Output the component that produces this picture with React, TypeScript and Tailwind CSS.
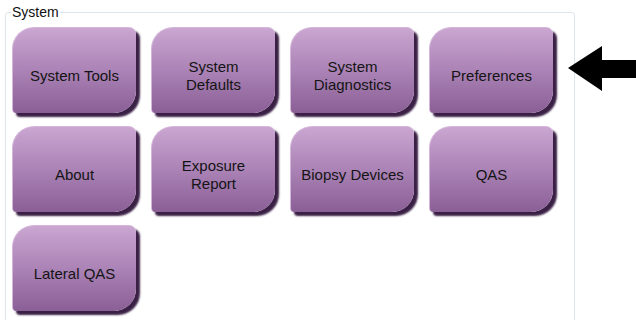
import React from "react";

const rows: string[][][] = [
  [["System Tools"], ["System", "Defaults"], ["System", "Diagnostics"], ["Preferences"]],
  [["About"], ["Exposure", "Report"], ["Biopsy Devices"], ["QAS"]],
  [["Lateral QAS"]],
];

function Btn({ lines }: { lines: string[] }) {
  return (
    <div className="w-[128px] h-[90px]">
      <div className="w-[124px] h-[86px] rounded-[22px_7px_22px_4px] bg-gradient-to-b from-[#caa6d1] via-[#ab83b6] to-[#8a5f96] shadow-[4px_4px_2px_#3a2045] flex flex-col items-center justify-center pt-[10px] text-[15px] leading-[18px] text-[#141414] border-l border-t border-[#d4b6da]">
        {lines.map((l, i) => (
          <span key={i}>{l}</span>
        ))}
      </div>
    </div>
  );
}

export default function App() {
  return (
    <div className="w-[636px] h-[320px] bg-white relative overflow-hidden" style={{ fontFamily: '"Liberation Sans", Arial, sans-serif' }}>
      <div className="pl-[5px] pt-[4px]">
        <fieldset className="w-[570px] h-[330px] border border-[#dfe5ec] rounded-[3px] px-[6px] pt-[7px] m-0">
          <legend className="text-[14px] leading-[16px] text-[#111] px-[1px] -ml-[1px]">System</legend>
          <div className="grid grid-cols-[128px_128px_128px_128px] gap-x-[11px] gap-y-[9px]">
            {rows.flat().map((b, i) => (
              <Btn key={i} lines={b} />
            ))}
          </div>
        </fieldset>
      </div>
      <svg className="absolute left-[566px] top-[46px]" width="70" height="46" viewBox="0 0 70 46">
        <polygon points="2,22 36,0 36,14 70,14 70,32 36,32 36,45" fill="#000" />
      </svg>
    </div>
  );
}
